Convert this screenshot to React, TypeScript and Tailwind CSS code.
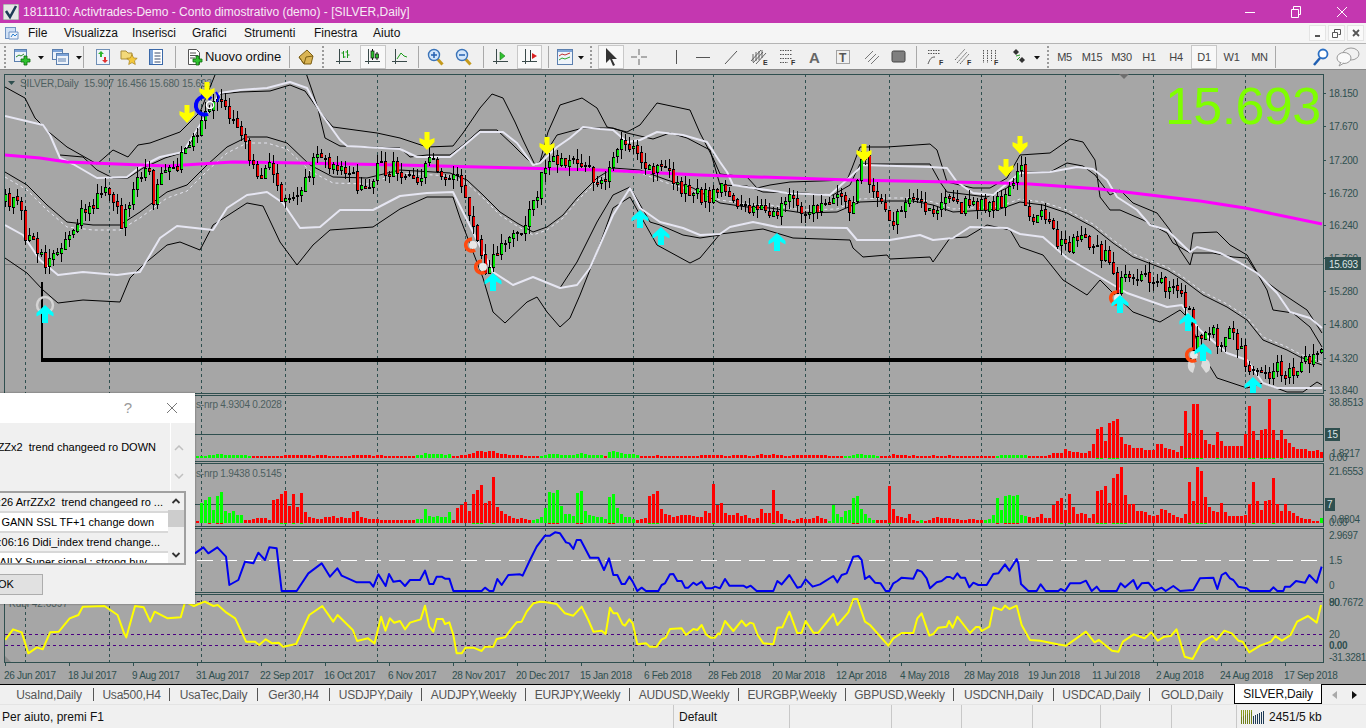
import React from "react";

const pts = (a: number[][]) => a.map((p) => p.join(",")).join(" ");
const zc = (ox: number, oy: number, a: number[][], sx = 3) => a.map(([x, y]) => [ox + x / sx, oy + y / 3]);

const closePath: number[][] = [[5,202],[17,192],[25,232],[42,262],[50,255],[62,248],[70,230],[82,208],[97,200],[110,188],[122,222],[133,182],[147,168],[153,198],[160,172],[177,175],[185,145],[197,138],[205,115],[217,102],[222,108],[233,115],[245,135],[250,158],[258,175],[268,165],[277,188],[287,202],[302,195],[305,182],[310,167],[322,148],[330,172],[340,158],[348,172],[358,188],[367,187],[377,165],[390,168],[400,173],[420,175],[428,155],[432,155],[440,178],[450,170],[458,175],[465,205],[475,230],[480,245],[485,265],[495,255],[499,250],[505,240],[515,235],[525,228],[530,200],[537,190],[543,165],[550,155],[560,160],[575,155],[585,170],[595,180],[605,175],[610,170],[613,150],[620,135],[625,145],[632,150],[640,165],[650,170],[660,168],[668,170],[673,180],[680,185],[690,192],[700,195],[710,198],[716,190],[730,195],[750,208],[765,215],[776,215],[785,200],[800,205],[810,208],[820,212],[828,205],[840,198],[850,205],[856,185],[860,165],[865,160],[868,185],[875,200],[885,210],[893,225],[900,205],[920,195],[930,215],[940,205],[960,205],[975,208],[995,205],[1000,200],[1010,190],[1017,175],[1020,165],[1025,205],[1030,218],[1043,215],[1053,233],[1060,242],[1070,247],[1080,238],[1093,247],[1100,252],[1110,263],[1117,287],[1122,283],[1133,273],[1137,283],[1147,278],[1153,283],[1163,287],[1177,283],[1185,303],[1190,310],[1193,343],[1198,343],[1202,330],[1210,328],[1220,343],[1230,330],[1237,343],[1248,367],[1257,368],[1267,372],[1277,367],[1285,377],[1293,367],[1302,362],[1310,360],[1317,360],[1322,338]];

function interp(path: number[][], x: number) {
  for (let i = 1; i < path.length; i++) {
    if (x <= path[i][0]) {
      const [a, b] = path[i - 1];
      const [c, d] = path[i];
      return b + ((d - b) * (x - a)) / (c - a || 1);
    }
  }
  return path[path.length - 1][1];
}
let seed = 12345;
const rnd = () => {
  seed = (seed * 1664525 + 1013904223) % 4294967296;
  return seed / 4294967296;
};
type Candle = { x: number; o: number; c: number; h: number; l: number };
const candles: Candle[] = [];
{
  let prev = 202;
  for (let x = 5; x <= 1321; x += 4) {
    const c = Math.round(interp(closePath, x) + (rnd() - 0.5) * 17);
    const o = Math.round(prev + (rnd() - 0.5) * 3);
    const h = Math.min(o, c) - Math.round(rnd() * 10);
    const l = Math.max(o, c) + Math.round(rnd() * 10);
    candles.push({ x, o, c, h, l });
    prev = c;
  }
}

const bandA = [[5,87],[25,98],[35,118],[50,133],[67,147],[97,164],[113,150],[128,157],[138,145],[150,143],[180,132],[200,112],[217,70],[305,70],[317,105],[325,138],[340,146],[400,148],[410,157],[427,155],[450,155],[463,145],[480,130],[497,130],[513,145],[533,165],[540,162],[557,135],[583,128],[613,128],[627,133],[653,139],[670,133],[687,138],[710,150],[720,185],[747,186],[763,192],[803,193],[833,195],[850,185],[860,164],[887,164],[930,164],[940,182],[947,192],[987,197],[1007,188],[1020,172],[1050,172],[1067,163],[1083,166],[1095,175],[1110,195],[1120,190],[1133,203],[1157,213],[1170,230],[1180,250],[1190,265],[1193,253],[1213,253],[1233,257],[1247,258],[1257,273],[1267,290],[1273,310],[1293,313],[1310,327],[1322,347]];
const bandB = [[60,155],[83,157],[97,170],[113,178],[128,178],[143,168],[165,158],[185,152],[200,126],[220,94],[240,92],[270,91],[290,85],[305,91],[320,112],[333,127],[377,133],[400,138],[427,147],[453,146],[463,133],[480,108],[492,94],[503,98],[515,122],[523,140],[535,165],[540,162],[548,132],[560,105],[582,98],[597,108],[607,127],[627,132],[640,125],[657,103],[690,110],[700,133],[713,158],[720,174],[747,177],[757,188],[770,185],[790,182],[820,181],[847,180],[852,168],[860,147],[887,147],[930,144],[937,150],[947,182],[973,188],[990,188],[1007,178],[1020,155],[1050,153],[1070,139],[1083,142],[1095,160],[1100,197],[1110,210],[1120,210],[1143,220],[1167,233],[1173,243],[1190,253],[1193,233],[1217,232],[1230,245],[1247,255],[1260,277],[1280,292],[1307,310],[1322,333]];
const whiteUp = [[5,116],[43,125],[50,135],[60,158],[73,164],[97,178],[127,177],[140,167],[160,157],[183,152],[200,125],[220,93],[240,90],[267,88],[290,82],[307,88],[320,112],[340,140],[347,146],[400,149],[417,157],[450,157],[467,143],[480,132],[503,132],[517,143],[533,165],[540,163],[557,147],[570,138],[583,127],[600,129],[613,130],[627,142],[640,140],[657,132],[683,135],[707,142],[720,162],[727,172],[733,185],[753,188],[787,193],[830,195],[850,177],[863,165],[930,167],[947,168],[957,182],[973,193],[993,195],[1020,173],[1050,172],[1077,167],[1093,169],[1107,180],[1117,197],[1137,210],[1150,225],[1167,230],[1190,252],[1197,247],[1220,253],[1240,263],[1257,273],[1277,293],[1290,312],[1310,318],[1322,328]];
const mid = [[5,172],[27,185],[47,205],[67,222],[93,225],[120,225],[140,212],[167,192],[187,185],[207,165],[227,147],[247,137],[267,137],[287,143],[310,165],[333,177],[367,178],[400,170],[450,173],[467,180],[483,195],[500,212],[517,223],[533,232],[547,227],[563,215],[577,198],[597,178],[613,168],[640,170],[667,180],[693,188],[720,203],[747,207],[770,208],[803,213],[837,212],[860,202],[887,201],[913,201],[933,205],[953,212],[987,210],[1000,209],[1020,202],[1043,205],[1067,213],[1093,227],[1113,243],[1133,257],[1167,270],[1183,280],[1203,295],[1227,307],[1247,320],[1263,340],[1287,350],[1300,357],[1322,365]];
const midDash = mid.map(([x, y]) => [x, y + (x < 130 ? 5 : x < 400 ? 6 : x < 700 ? 3 : -3)]);
const whiteLow = [[5,225],[23,235],[40,260],[58,275],[83,272],[117,275],[140,272],[160,238],[177,226],[213,230],[227,208],[247,195],[267,192],[283,203],[300,228],[320,227],[340,210],[373,210],[400,196],[427,193],[453,192],[458,202],[473,232],[493,272],[513,285],[533,277],[560,288],[577,285],[590,268],[603,238],[613,215],[630,188],[640,208],[660,222],[683,228],[700,235],[720,234],[730,227],[753,222],[777,227],[847,228],[857,240],[890,240],[920,235],[933,240],[953,238],[970,227],[1007,228],[1020,234],[1043,237],[1067,258],[1100,277],[1127,293],[1167,307],[1182,305],[1187,313],[1200,330],[1227,353],[1247,360],[1263,383],[1277,388],[1322,388]];
const lowA = [[5,258],[27,273],[43,290],[58,303],[83,300],[120,302],[130,278],[143,265],[167,245],[180,242],[200,250],[213,225],[247,203],[263,206],[280,242],[297,265],[313,245],[330,230],[373,227],[400,209],[427,197],[453,197],[460,218],[473,252],[483,278],[493,312],[505,323],[527,302],[537,297],[547,312],[560,327],[570,318],[580,295],[597,252],[613,208],[630,197],[640,215],[657,245],[690,263],[700,258],[720,234],[763,229],[793,238],[850,240],[853,248],[863,257],[887,255],[890,259],[930,257],[933,262],[950,238],[967,237],[987,225],[1010,230],[1020,247],[1043,255],[1063,280],[1087,295],[1100,280],[1113,293],[1133,312],[1160,322],[1180,310],[1190,320],[1200,350],[1217,378],[1247,388],[1263,383],[1287,392],[1303,392],[1317,382],[1322,385]];
const lowB = [[560,288],[577,262],[597,222],[613,195],[630,187],[650,222],[660,225],[683,235],[700,238],[720,235]];
const magenta = [[5,155],[40,158],[67,162],[117,164],[167,166],[233,162],[300,163],[400,165],[600,170],[700,175],[850,180],[1000,183],[1030,184],[1100,189],[1150,195],[1200,201],[1245,208],[1322,224]];

const blue = [
  ...zc(0, 385, [[585,505],[610,487],[625,505],[652,487],[678,515],[688,600],[715,585],[735,530],[760,535],[775,503],[795,525],[808,487],[830,490],[845,618],[890,618],[925,565],[965,535],[990,575],[1012,550],[1025,572],[1070,592],[1110,592],[1120,605],[1135,568],[1157,603],[1167,567],[1180,590]]),
  ...zc(400, 395, [[0,557],[15,573],[30,555],[60,555],[75,527],[88,567],[100,567],[110,545],[125,545],[135,551],[148,551],[160,588],[245,588],[255,578],[268,588],[280,588],[292,552],[305,570],[325,540],[360,538],[368,542],[390,495],[410,455],[435,422],[450,422],[465,412],[480,415],[498,442],[508,445],[520,462],[530,435],[542,435],[570,488],[595,488],[612,525],[627,490],[640,540],[652,540],[665,567],[675,567],[688,545],[698,560],[712,588],[725,578],[738,588],[775,588],[785,570],[795,565],[810,538],[820,537],[832,558],[845,558],[855,578],[865,578],[880,563],[890,570],[905,560],[918,580],[935,580],[945,575]]),
  ...zc(720, 395, [[0,580],[15,552],[28,572],[70,572],[80,578],[92,572],[110,588],[160,588],[172,558],[185,568],[208,540],[232,578],[243,575],[257,553],[278,575],[300,568],[340,543],[352,562],[365,540],[380,535],[400,485],[415,483],[425,495],[435,552],[448,543],[465,563],[482,565],[497,588],[508,588],[520,565],[532,558],[545,548],[580,551],[592,525],[605,530],[620,550],[630,580],[650,562],[665,558],[680,546],[690,546],[700,552],[712,535],[722,548],[735,548],[748,577],[760,563],[775,570],[800,570],[820,537],[835,535],[855,508],[868,527],[890,492]]),
  ...zc(1000, 390, [[55,520],[63,582],[85,603],[110,603],[122,583],[137,603],[175,603],[182,597],[195,603],[210,580],[240,580],[258,572],[275,603],[290,590],[300,603],[350,603],[362,580],[375,592],[400,570],[412,597],[425,580],[445,578],[465,602],[485,593],[497,603],[520,588],[540,603],[580,600],[600,565],[640,563],[652,597],[665,555],[677,548],[690,565],[700,570],[715,590],[740,595],[750,603],[810,603],[820,592],[832,603],[850,603],[855,590],[870,590],[888,573],[915,578],[928,555],[950,578],[965,530]]),
];
const yellow = [
  ...zc(0, 600, [[12,120],[30,88],[50,97],[65,160],[85,142],[98,148],[115,97],[135,95],[160,55],[180,45],[190,20],[240,18],[270,45],[285,100],[290,112],[310,18],[330,22],[345,65],[355,35],[385,55],[415,52],[425,5],[445,18],[470,5],[490,18],[500,15],[520,38],[540,55],[565,125],[585,125],[595,135],[610,118],[625,130],[640,128],[650,140],[680,132],[710,45],[740,18],[765,65],[775,45],[810,90],[820,123],[845,115],[860,130],[875,50],[885,92],[895,55],[905,68]], 2.296),
  ...zc(400, 395, [[0,678],[15,703],[30,683],[62,673],[75,632],[88,695],[100,710],[110,672],[128,672],[135,687],[148,682],[160,720],[170,775],[185,775],[197,758],[220,758],[245,768],[255,755],[280,755],[290,732],[315,727],[335,700],[350,682],[365,680],[380,650],[400,625],[420,620],[440,622],[470,627],[495,655],[520,662],[545,635],[565,675],[580,710],[605,707],[617,717],[630,638],[640,655],[652,655],[668,688],[675,692],[688,673],[698,685],[712,748],[738,745],[750,755],[770,755],[785,733],[797,728],[810,702],[845,700],[858,720],[880,702],[892,705],[905,690],[918,718],[932,728],[945,728],[955,715]]),
  ...zc(720, 395, [[0,718],[15,678],[40,708],[65,677],[78,693],[90,683],[100,686],[113,720],[130,745],[160,748],[172,698],[187,697],[208,650],[232,715],[245,713],[257,678],[280,713],[295,713],[340,657],[352,690],[385,652],[400,612],[412,612],[435,680],[450,690],[505,752],[520,730],[545,714],[580,714],[592,670],[605,655],[628,722],[640,717],[655,698],[680,695],[687,678],[698,698],[712,665],[750,714],[768,696],[778,696],[785,708],[808,695],[820,637],[845,645],[855,632],[868,642],[890,632],[905,690],[930,735]]),
  ...zc(683, 600, [[820,122],[860,133],[880,137],[900,118],[925,95],[945,127],[955,120],[985,152],[1000,155],[1010,125],[1035,103],[1060,115],[1075,97],[1090,122],[1105,110],[1120,108],[1133,88],[1152,170],[1170,177],[1190,128],[1215,108],[1225,120],[1243,92],[1260,100],[1275,122],[1285,125],[1300,157],[1325,137],[1350,125],[1360,108],[1375,122],[1395,105],[1410,65],[1435,48],[1455,68],[1465,15]], 2.296),
];

const fill = (m: Map<number, number>, start: number, arr: number[]) => arr.forEach((v, i) => m.set(start + 4 * i, v));
const vol1 = new Map<number, number>();
for (let x = 197; x <= 1321; x += 4) vol1.set(x, 2);
fill(vol1, 197, [-2,-2,-2,-3,-3,-4,-4,-3,-3,-3,-3,-3,-3,-2]);
fill(vol1, 285, [3,3,3,3,3,3,3,2,3,3,3]);
fill(vol1, 353, [3,3,3,3,3,2,3,3]);
fill(vol1, 401, [2,2,2,2,-3,-3,-5,-4,-4,-4,-4,-3,-4,2,2,3,3,4,5,7,7,6,7,7,5,4,4,3,3,3,3,2,2,2,2,-2,-3,-4,-4,-4,-3,-3,-3,-3,-4,-5,-4,-3,-3,-3,-3,2,-6,-7,-6,-5,-4,-4,-4,-3,2,2,2,2,3,2,2,2,2,2,2,2,2,2,2,3,3,3,3,3]);
fill(vol1, 721, [3,2,2,3,3,3,3,2,2,3,4,3,3,4,3,3,2,2,3,3,3,3,3,3,3,3,3,2,2,2,2,-2,-2,-3,-4,-4,-3,-3,-3,-2,2,2,2,4,3,3,3,2,3,2,2,2,2,3,2,2,2,3,2,2,2,2,2,2,2,2,2,2,2,-2]);
fill(vol1, 1001, [-3,-3,-3,-3,-3,-3,-3,2,2,2,2,2,3,5,5,5,9,7,6,6,5,5,7,14,29,31,17,35,37,39,21,14,13,10,10,10,8,8,8,14,14,10,9,8,6,12,47,25,54,54,28,18,14,13,26,17,12,12,12,12,12,24,52,27,18,28,29,59,28,18,28,19,15,11,9,9,9,7,7,8,6]);
const vol2 = new Map<number, number>();
for (let x = 197; x <= 1321; x += 4) vol2.set(x, 4);
fill(vol2, 197, [2,-20,-23,-26,-13,-27,-31,-12,-10,-12,-8,-8,3,3,4,5,5,5,3,23,24,29,32,17,29,16,30,11,6,5,4,4,6,6,7,5,6,5,5,11,12,6,5,4,4,4,3,3,3,3,3]);
fill(vol2, 401, [3,3,3,3,-4,-4,-14,-7,-6,-7,-6,-6,-11,3,15,18,21,12,29,33,38,20,22,46,16,12,9,7,5,4,5,4,3,-3,-4,-6,-15,-31,-30,-33,-17,-9,-9,-7,-30,-32,-12,-8,-7,-6,-6,-4,-26,-29,-15,-9,-6,-6,-4,3,4,5,27,29,32,14,9,8,6,7,8,8,8,7,6,6,12,10,39,18]);
fill(vol2, 721, [20,10,8,8,10,7,8,5,4,5,14,10,10,33,12,9,4,3,2,4,5,4,4,5,7,5,4,-2,-18,-9,-6,-12,-13,-25,-27,-14,-9,-5,-3,3,3,3,37,14,7,6,5,9,3,2,-3,2,3,5,6,5,5,5,4,4,3,3,4,4,3,3,-3,-4,-8,-25]);
fill(vol2, 1001, [-13,-27,-28,-27,-28,-8,-7,6,5,6,9,5,5,18,22,25,13,29,16,9,10,9,5,9,32,33,37,20,45,49,56,28,19,19,12,12,11,8,7,8,14,13,10,8,6,5,9,41,22,56,52,26,16,12,11,20,11,7,7,7,7,8,19,41,22,13,22,23,45,19,12,19,12,10,7,5,4,4,2,2,-5,2,-7]);

const vgrid = [25,109,201,285,377,465,545,633,713,805,889,981,1065,1153,1245];
const axisC = "#2f4f4f";

function AxisText({ x = 1329, y, children, bold }: { x?: number; y: number; children: React.ReactNode; bold?: boolean }) {
  return <text x={x} y={y + 4} fontSize={10} letterSpacing={-0.3} fill={axisC} fontWeight={bold ? 700 : 400}>{children}</text>;
}
function Pane({ y0, y1, id, children, axis }: { y0: number; y1: number; id: string; children: React.ReactNode; axis: React.ReactNode }) {
  return (
    <svg className="block shrink-0" width={1366} height={y1 - y0} viewBox={`0 ${y0} 1366 ${y1 - y0}`}>
      <defs><clipPath id={id}><rect x={5} y={y0 + 1} width={1318} height={y1 - y0 - 2} /></clipPath></defs>
      {vgrid.map((x) => <line key={x} x1={x + 0.5} x2={x + 0.5} y1={y0} y2={y1} stroke={axisC} strokeDasharray="3 3" shapeRendering="crispEdges" />)}
      <g clipPath={`url(#${id})`}>{children}</g>
      <g shapeRendering="crispEdges" fill="none" stroke={axisC}>
        <line x1={4} x2={1324} y1={y0 + 0.5} y2={y0 + 0.5} />
        <line x1={4} x2={1324} y1={y1 - 0.5} y2={y1 - 0.5} />
        <line x1={4.5} x2={4.5} y1={y0} y2={y1} />
        <line x1={1323.5} x2={1323.5} y1={y0} y2={y1} />
      </g>
      {axis}
    </svg>
  );
}
const L = ({ p, c, w = 1, dash }: { p: number[][]; c: string; w?: number; dash?: string }) => (
  <polyline points={pts(p)} fill="none" stroke={c} strokeWidth={w} strokeDasharray={dash} strokeLinejoin="round" />
);

const DownArrow = ({ x, y }: { x: number; y: number }) => (
  <path d={`M${x - 2.5} ${y}h5v8l5 -2v4l-7.5 8l-7.5 -8v-4l5 2z`} fill="#ffff00" />
);
const UpArrow = ({ x, y }: { x: number; y: number }) => (
  <path d={`M${x} ${y}l8.500 8v3.500l-5.500 -3v9.500h-6v-9.500l-5.500 3v-3.500z`} fill="#00ffff" />
);
const Orange = ({ x, y }: { x: number; y: number }) => (
  <g fill="none">
    <circle cx={x + 3} cy={y} r={4} fill="#e8e8e8" />
    <path d={`M${x + 2} ${y - 6}a6 6 0 1 0 3 11`} stroke="#ff4a10" strokeWidth={3.500} />
  </g>
);
const Bars = ({ m, bottom }: { m: Map<number, number>; bottom: number }) => (
  <g shapeRendering="crispEdges">
    {[...m.entries()].map(([x, v]) => {
      const h = Math.abs(v);
      return (
        <g key={x}>
          <rect x={x - 1} y={bottom - h} width={3} height={h} fill={v < 0 ? "#00ff00" : "#ff0000"} />
          {h > 24 && <rect x={x - 1} y={bottom} width={3} height={1} fill={v < 0 ? "#ff0000" : "#00ff00"} />}
        </g>
      );
    })}
  </g>
);

function Main() {
  return (
    <Pane y0={74} y1={394} id="m" axis={
      <g>
        {[[93,"18.150"],[126,"17.670"],[160,"17.200"],[193,"16.720"],[225,"16.240"],[258,"15.760"],[291,"15.280"],[324,"14.800"],[358,"14.320"],[390,"13.840"]].map(([y, t]) => (
          <g key={t}><line x1={1324} x2={1326} y1={(y as number) + 0.5} y2={(y as number) + 0.5} stroke={axisC} shapeRendering="crispEdges" /><AxisText y={y as number}>{t}</AxisText></g>
        ))}
        <rect x={1325} y={257} width={36} height={13} fill={axisC} />
        <text x={1329} y={268} fontSize={10} letterSpacing={-0.3} fill="#dce4e4">15.693</text>
        <path d="M1119 74h10l-5 5z" fill="#6e6e6e" />
      </g>
    }>
      <rect x={0} y={264} width={1323} height={1} fill="#7d7d7d" />
      <text x={20} y={87} fontSize={10} letterSpacing={-0.1} fill="#4d5f5f" style={{ whiteSpace: "pre" }}>SILVER,Daily  15.907 16.456 15.680 15.693</text>
      <path d="M8 81h7l-3.500 4z" fill={axisC} />
      <text x={1165} y={124} fontSize={52} fill="#7fff00" letterSpacing={-0.6}>15.693</text>
      <L p={bandA} c="#000" />
      <L p={bandB} c="#000" />
      <L p={mid} c="#000" />
      <L p={lowA} c="#000" />
      <L p={lowB} c="#000" />
      <L p={midDash} c="#e4e4ee" dash="3 3" />
      <L p={whiteUp} c="#e6e6f2" w={2} />
      <L p={whiteLow} c="#e6e6f2" w={2} />
      <L p={magenta} c="#ff00ff" w={3} />
      <g shapeRendering="crispEdges">
        {candles.map((k) => {
          const top = Math.min(k.o, k.c);
          const h = Math.max(Math.abs(k.o - k.c), 1);
          return (
            <g key={k.x}>
              <rect x={k.x} y={k.h} width={1} height={k.l - k.h} fill="#000" />
              <rect x={k.x - 1} y={top} width={3} height={h + 1} fill="#000" />
              {h > 1 && <rect x={k.x} y={top + 1} width={2} height={h - 1} fill={k.c < k.o ? "#00e000" : "#e80000"} />}
            </g>
          );
        })}
      </g>
      <rect x={41} y={282} width={2} height={78} fill="#000" shapeRendering="crispEdges" />
      <rect x={41} y={358} width={1155} height={4} fill="#000" shapeRendering="crispEdges" />
      <circle cx={45} cy={305} r={8} fill="none" stroke="#d4d4d4" strokeWidth={2.500} />
      <path d="M1193 358a8 8 0 0 0 0 15l2 -7z M1206 373a8 8 0 0 0 -3 -15l-2 8z" fill="#dcdcdc" />
      <Orange x={470} y={245} />
      <Orange x={480} y={267} />
      <Orange x={1115} y={298} />
      <Orange x={1191} y={355} />
      <g fill="none">
        <path d="M211 99a9 9 0 1 0 -3 15" stroke="#0000ff" strokeWidth={4} />
        <circle cx={210} cy={105} r={3.500} stroke="#fff" strokeWidth={1.500} />
        <path d="M216 92l3 5l-2 5" stroke="#0000ff" strokeWidth={2} />
      </g>
      {[[187,105],[207,82],[427,132],[547,137],[864,144],[1006,159],[1020,136]].map(([x, y]) => <DownArrow key={x} x={x} y={y} />)}
      {[[45,305],[493,273],[640,210],[661,227],[777,233],[1120,295],[1188,313],[1203,343],[1253,377]].map(([x, y]) => <UpArrow key={x} x={x} y={y} />)}
    </Pane>
  );
}

function Subs() {
  return (
    <>
      <Pane y0={395} y1={462} id="s1" axis={
        <g>
          <AxisText y={402}>38.8513</AxisText>
          <rect x={1325} y={428} width={15} height={13} fill={axisC} />
          <text x={1327} y={438} fontSize={10} fill="#dce4e4">15</text>
          <AxisText x={1331} y={453}>1.8217</AxisText>
          <AxisText y={457}>0.00</AxisText>
        </g>
      }>
        <rect x={5} y={434} width={1318} height={1} fill={axisC} />
        <text x={196} y={408} fontSize={10} letterSpacing={-0.2} fill="#4d5f5f">s-nrp 4.9304 0.2028</text>
        <Bars m={vol1} bottom={458} />
      </Pane>
      <Pane y0={463} y1={527} id="s2" axis={
        <g>
          <AxisText y={471}>21.6553</AxisText>
          <rect x={1325} y={498} width={10} height={13} fill={axisC} />
          <text x={1327} y={508} fontSize={10} fill="#dce4e4">7</text>
          <AxisText x={1331} y={519}>0.8804</AxisText>
          <AxisText y={522}>0.00</AxisText>
        </g>
      }>
        <rect x={5} y={504} width={1318} height={1} fill={axisC} />
        <text x={196} y={477} fontSize={10} letterSpacing={-0.2} fill="#4d5f5f">s-nrp 1.9438 0.5145</text>
        <Bars m={vol2} bottom={523} />
      </Pane>
      <Pane y0={528} y1={593} id="s3" axis={
        <g>
          <AxisText y={535}>2.9697</AxisText>
          <AxisText y={560}>1.5</AxisText>
          <AxisText y={585}>0</AxisText>
        </g>
      }>
        <line x1={5} x2={1323} y1={560.5} y2={560.5} stroke="#fff" strokeWidth={1} strokeDasharray="16 8" shapeRendering="crispEdges" />
        <L p={blue} c="#0000f0" w={2} />
      </Pane>
      <Pane y0={594} y1={663} id="s4" axis={
        <g>
          <AxisText y={602}>80</AxisText>
          <AxisText y={602}>90.7672</AxisText>
          <AxisText y={634}>20</AxisText>
          <AxisText y={645} bold>0.00</AxisText>
          <AxisText y={657}>-31.3281</AxisText>
        </g>
      }>
        {[601, 634, 645].map((y) => <line key={y} x1={5} x2={1323} y1={y + 0.5} y2={y + 0.5} stroke="#4b0082" strokeDasharray="3 3" shapeRendering="crispEdges" />)}
        <text x={9} y={607} fontSize={10} fill="#4d5f5f">Kubi 42.6397</text>
        <L p={yellow} c="#ffff00" w={2} />
        <path d="M5 662v-6l6 6z" fill="#8a8a8a" />
      </Pane>
    </>
  );
}

const dates = ["26 Jun 2017","18 Jul 2017","9 Aug 2017","31 Aug 2017","22 Sep 2017","16 Oct 2017","6 Nov 2017","28 Nov 2017","20 Dec 2017","15 Jan 2018","6 Feb 2018","28 Feb 2018","20 Mar 2018","12 Apr 2018","4 May 2018","28 May 2018","19 Jun 2018","11 Jul 2018","2 Aug 2018","24 Aug 2018","17 Sep 2018"];

/* ---------- toolbar icons ---------- */
const Ic = ({ children, w = 18, h = 18 }: { children: React.ReactNode; w?: number; h?: number }) => (
  <svg width={w} height={h} viewBox={`0 0 ${w} ${h}`} className="block shrink-0">{children}</svg>
);
const Plus = ({ x = 8, y = 8 }: { x?: number; y?: number }) => (
  <path d={`M${x + 3} ${y}h3v3h3v3h-3v3h-3v-3h-3v-3h3z`} fill="#2fc22f" stroke="#0c6a0c" strokeWidth={0.8} />
);
const Win = ({ x = 1, y = 1, w = 12, h = 12 }: { x?: number; y?: number; w?: number; h?: number }) => (
  <g>
    <rect x={x + 0.5} y={y + 0.5} width={w} height={h} fill="#eef3fa" stroke="#5b7fae" />
    <rect x={x + 1} y={y + 1} width={w - 1} height={2} fill="#7ea4d8" />
  </g>
);
const Caret = () => <path d="M0 0h6l-3 3.500z" fill="#111" transform="translate(4 8)" />;
const CaretBox = () => <Ic w={10} h={18}><Caret /></Ic>;
const Axes = () => <path d="M4.500 1v15M1 13.500h15" stroke="#3a4a4a" fill="none" />;

const iNew = <Ic><Win /><path d="M3 9l3 -2l2 1l3 -2" stroke="#2c8a2c" fill="none" /><Plus /></Ic>;
const iProf = <Ic><Win x={1} y={1} w={10} h={10} /><Win x={5} y={5} w={12} h={11} /><path d="M7 11h8M7 13h8" stroke="#5b7fae" /></Ic>;
const iMarket = <Ic><rect x={2.500} y={1.500} width={13} height={15} fill="#eef3fa" stroke="#6f8fb5" /><path d="M7 3l3 3h-2v3h-2v-3h-2z" fill="#2fb52f" /><path d="M11 15l-3 -3h2v-3h2v3h2z" fill="#e03030" /></Ic>;
const iNav = <Ic><path d="M1 3h5l2 2h4v6h-11z" fill="#f3d97a" stroke="#a98d3a" /><path d="M12 6.500l1.600 3.400l3.600 .4l-2.700 2.500l.8 3.700l-3.300 -1.900l-3.300 1.900l.8 -3.700l-2.700 -2.500l3.600 -.4z" fill="#f4c93c" stroke="#a5801d" strokeWidth={0.7} /></Ic>;
const iTerm = <Ic><rect x={2.500} y={1.500} width={13} height={15} fill="#fff" stroke="#3a68a8" /><rect x={3} y={2} width={3} height={14} fill="#7ea4d8" /><path d="M7.500 5h6M7.500 8h6M7.500 11h6M7.500 14h6" stroke="#3a4a6a" /></Ic>;
const iOrder = <Ic><path d="M2.500 1.500h8l3 3v12h-11z" fill="#fff" stroke="#555" /><path d="M4 5h6M4 7.500h8M4 10h5" stroke="#555" /><Plus x={7} y={8} /></Ic>;
const iGold = <Ic><path d="M2 9l8 -7l6 6l-2 8h-7z" fill="#d9b454" stroke="#7d5f14" /><path d="M2 9l5 7l2 -7l7 -1" fill="none" stroke="#7d5f14" /></Ic>;
const iBar = <Ic><Axes /><path d="M8.500 3v7M6.500 5h2M8.500 9h2M12.500 2v8M10.500 4h2M12.500 7h2" stroke="#1a9a1a" fill="none" /></Ic>;
const iCandle = <Ic><Axes /><path d="M8.500 1v11" stroke="#111" /><rect x={7} y={3} width={3} height={7} fill="#2fc22f" stroke="#111" strokeWidth={0.7} /><path d="M13 4v8" stroke="#111" /><rect x={11.500} y={6} width={3} height={4} fill="#2fc22f" stroke="#111" strokeWidth={0.7} /></Ic>;
const iLine = <Ic><Axes /><path d="M6 11l4 -6l3 3l3 1" stroke="#1a9a1a" fill="none" /></Ic>;
const Zoom = ({ plus }: { plus?: boolean }) => (
  <Ic>
    <path d="M10.500 11l5 5.500" stroke="#c59a1c" strokeWidth={3} />
    <circle cx={7} cy={7} r={5.500} fill="#d4e6fa" stroke="#3a73b8" strokeWidth={1.400} />
    <path d={plus ? "M4 7h6M7 4v6" : "M4 7h6"} stroke="#2560b0" strokeWidth={1.500} />
  </Ic>
);
const iAuto = <Ic><Axes /><path d="M8 4l5 4l-5 4z" fill="#2fc22f" stroke="#1a7a1a" strokeWidth={0.6} /></Ic>;
const iShift = <Ic><Axes /><path d="M9.500 2v11" stroke="#2a3a3a" /><path d="M16 8l-5 -3v6z" fill="#d82020" /></Ic>;
const iTempl = <Ic><Win x={1} y={1} w={15} h={15} /><path d="M3 8l3 -2l3 1l5 -2" stroke="#c03030" fill="none" /><path d="M3 12l3 -2l3 1l5 -2" stroke="#2fa52f" fill="none" /></Ic>;
const iCursor = <Ic w={14} h={20}><path d="M2 1v15l4 -4l3 7l2 -1l-3 -6h5z" fill="#333" /></Ic>;
const iCross = <Ic><path d="M9 1v6M9 11v6M1 9h6M11 9h6" stroke="#666" fill="none" /></Ic>;
const iV = <Ic><path d="M9.500 2v14" stroke="#555" /></Ic>;
const iH = <Ic><path d="M2 9.500h14" stroke="#555" /></Ic>;
const iT = <Ic><path d="M3 16l12 -13" stroke="#555" /></Ic>;
const Tag = ({ t }: { t: string }) => <text x={13} y={17} fontSize={7} fontWeight={700} fill="#333">{t}</text>;
const iE = <Ic><path d="M1 13l10 -11M3 15l10 -11M6 16l10 -11M3 6v8M6 4v9M9 3v9M12 2v8" stroke="#555" fill="none" strokeWidth={0.9} /><Tag t="E" /></Ic>;
const iF = <Ic><path d="M2 2.500h12M2 6.500h12M2 10.500h12M2 14.500h8" stroke="#555" strokeDasharray="1.500 1" /><Tag t="F" /></Ic>;
const iA = <Ic><text x={3} y={15} fontSize={15} fontWeight={700} fill="#666">A</text></Ic>;
const iTx = <Ic><rect x={2.500} y={2.500} width={13} height={13} fill="none" stroke="#555" strokeDasharray="1 1" /><text x={5} y={14} fontSize={12} fontWeight={700} fill="#555">T</text></Ic>;
const iCh = <Ic><path d="M2 11l8 -8M5 14l8 -8M8 16l8 -8" stroke="#777" /></Ic>;
const iRect = <Ic><rect x={2} y={3} width={13} height={11} rx={1.500} fill="#7f7f7f" stroke="#444" /></Ic>;
const iFA = <Ic><path d="M2 2.500h12M2 5.500h12" stroke="#555" strokeDasharray="1.500 1" /><path d="M2 16c2 -5 3 -7 7 -7" stroke="#555" fill="none" /><Tag t="F" /></Ic>;
const iFC = <Ic><path d="M1 12l10 -11M3 15l10 -11M6 16l9 -10" stroke="#666" strokeDasharray="2 .8" /><Tag t="F" /></Ic>;
const iFT = <Ic><path d="M2.500 2v13M6.500 2v13M10.500 2v11M14.500 2v9" stroke="#555" strokeDasharray="1.500 1" /><Tag t="F" /></Ic>;
const iMore = <Ic><path d="M6 1l3 3l-3 3l-3 -3z" fill="#333" /><path d="M12 9l3 3l-3 3l-3 -3z" fill="#333" /><path d="M6 8l4 -1M7 12l3 -3" stroke="#2a9a2a" /></Ic>;
const iSearch = <Ic><circle cx={11} cy={6} r={4.500} fill="#fff" stroke="#2a6fc4" strokeWidth={1.800} /><path d="M8 10l-6 7" stroke="#1f5fb2" strokeWidth={2.500} /></Ic>;
const iChat = <Ic w={24} h={20}><ellipse cx={15} cy={7} rx={8} ry={6} fill="#f1f1f1" stroke="#9a9a9a" /><ellipse cx={8} cy={11} rx={7} ry={5.500} fill="#fafafa" stroke="#9a9a9a" /><path d="M5 15l-2 4l5 -3" fill="#fafafa" stroke="#9a9a9a" /></Ic>;

const Sep = () => <div className="w-[1px] h-[22px] bg-[#a9a9a9] shrink-0" />;
const Grip = () => <div className="h-[22px] border-l-2 border-dotted border-[#9a9a9a] shrink-0" />;

function Slot({ cls, on, children }: { cls: string; on?: boolean; children: React.ReactNode }) {
  return (
    <div className={`${cls} h-[24px] flex items-center justify-center shrink-0 ${on ? "bg-[#f8f8f8] border border-[#c8c8c8]" : ""}`}>{children}</div>
  );
}
const TF = ({ cls, t, on }: { cls: string; t: string; on?: boolean }) => (
  <Slot cls={cls} on={on}><span className="text-[11px] tracking-[-0.3px] text-[#444]">{t}</span></Slot>
);

function Toolbar() {
  return (
    <div className="h-[27px] flex items-center bg-[#f0f0f0] border-t border-[#b4b4b4] shrink-0">
      <div className="w-[4px]" /><Grip /><div className="w-[4px]" />
      <Slot cls="w-[24px]">{iNew}</Slot><CaretBox />
      <div className="w-[4px]" />
      <Slot cls="w-[24px]">{iProf}</Slot><CaretBox />
      <div className="w-[1px]" /><Sep />
      <div className="w-[7px]" />
      <Slot cls="w-[23px]">{iMarket}</Slot>
      <Slot cls="w-[29px]">{iNav}</Slot>
      <Slot cls="w-[26px]">{iTerm}</Slot>
      <div className="w-[6px]" /><Sep />
      <div className="w-[10px]" />
      <Slot cls="w-[18px]">{iOrder}</Slot>
      <span className="text-[13px] w-[80px] text-[#111] pl-[1px] tracking-[-0.1px] shrink-0">Nuovo ordine</span>
      <div className="w-[5px]" /><Sep />
      <Slot cls="w-[32px]">{iGold}</Slot>
      <Grip />
      <div className="w-[4px]" />
      <Slot cls="w-[32px]">{iBar}</Slot>
      <Slot cls="w-[26px]" on>{iCandle}</Slot>
      <Slot cls="w-[28px]">{iLine}</Slot>
      <div className="w-[4px]" /><Sep />
      <Slot cls="w-[34px]"><Zoom plus /></Slot>
      <Slot cls="w-[22px]"><Zoom /></Slot>
      <div className="w-[8px]" /><Sep />
      <Slot cls="w-[33px]">{iAuto}</Slot>
      <Slot cls="w-[25px]" on>{iShift}</Slot>
      <div className="w-[6px]" /><Sep />
      <div className="w-[7px]" />
      <Slot cls="w-[18px]">{iTempl}</Slot><CaretBox />
      <div className="w-[6px]" /><Grip />
      <div className="w-[6px]" />
      <Slot cls="w-[26px]" on>{iCursor}</Slot>
      <Slot cls="w-[30px]">{iCross}</Slot>
      <div className="w-[8px]" />
      <Slot cls="w-[27px]">{iV}</Slot>
      <Slot cls="w-[28px]">{iH}</Slot>
      <Slot cls="w-[28px]">{iT}</Slot>
      <Slot cls="w-[28px]">{iE}</Slot>
      <Slot cls="w-[28px]">{iF}</Slot>
      <Slot cls="w-[27px]">{iA}</Slot>
      <Slot cls="w-[29px]">{iTx}</Slot>
      <Slot cls="w-[29px]">{iCh}</Slot>
      <Slot cls="w-[26px]">{iRect}</Slot>
      <div className="w-[4px]" /><Sep />
      <div className="w-[4px]" />
      <Slot cls="w-[28px]">{iFA}</Slot>
      <Slot cls="w-[28px]">{iFC}</Slot>
      <Slot cls="w-[26px]">{iFT}</Slot>
      <div className="w-[5px]" />
      <Slot cls="w-[22px]">{iMore}</Slot><CaretBox />
      <div className="w-[7px]" /><Grip />
      <div className="w-[3px]" />
      <TF cls="w-[25px]" t="M5" />
      <TF cls="w-[30px]" t="M15" />
      <TF cls="w-[29px]" t="M30" />
      <TF cls="w-[26px]" t="H1" />
      <TF cls="w-[28px]" t="H4" />
      <div className="w-[1px]" />
      <TF cls="w-[26px]" t="D1" on />
      <TF cls="w-[29px]" t="W1" />
      <TF cls="w-[27px]" t="MN" />
      <div className="w-[2px]" /><Sep />
      <div className="flex-1" />
      <Slot cls="w-[26px]">{iSearch}</Slot>
      <Slot cls="w-[28px]">{iChat}</Slot>
      <div className="w-[4px]" />
    </div>
  );
}

const MdiBtn = ({ children }: { children: React.ReactNode }) => (
  <div className="w-[17px] h-[16px] bg-[#fafafa] border border-[#e4e4e4] flex items-center justify-center">{children}</div>
);

const tabs = [
  { t: "UsaInd,Daily", w: "w-[94px] pl-[5px]" },
  { t: "Usa500,H4", w: "w-[76px]" },
  { t: "UsaTec,Daily", w: "w-[88px]" },
  { t: "Ger30,H4", w: "w-[72px]" },
  { t: "USDJPY,Daily", w: "w-[92px]" },
  { t: "AUDJPY,Weekly", w: "w-[104px]" },
  { t: "EURJPY,Weekly", w: "w-[104px]" },
  { t: "AUDUSD,Weekly", w: "w-[109px]" },
  { t: "EURGBP,Weekly", w: "w-[107px]" },
  { t: "GBPUSD,Weekly", w: "w-[108px]" },
  { t: "USDCNH,Daily", w: "w-[100px]" },
  { t: "USDCAD,Daily", w: "w-[96px]" },
  { t: "GOLD,Daily", w: "w-[84px]" },
];

function Dialog() {
  const Row = ({ t, gray, end }: { t: string; gray?: boolean; end: string }) => (
    <div className={`h-[20px] flex items-center border-b-2 border-[#d8d8d8] overflow-hidden ${gray ? "bg-[#f0f0f0]" : "bg-white"}`}>
      <div className={`${end} flex justify-end whitespace-nowrap text-[11px] text-black shrink-0`}>{t}</div>
    </div>
  );
  return (
    <div className="absolute left-[-205px] top-[393px] w-[400px] h-[211px] bg-[#f0f0f0] flex flex-col shadow-[0_0_2px_rgba(0,0,0,0.4)]">
      <div className="h-[30px] bg-white flex items-center justify-end shrink-0">
        <span className="text-[15px] text-[#9a9a9a] mr-[34px]">?</span>
        <svg width={12} height={12} viewBox="0 0 12 12" className="mr-[17px]"><path d="M1 1l10 10M11 1l-10 10" stroke="#777" fill="none" /></svg>
      </div>
      <div className="h-[68px] flex shrink-0">
        <div className="w-[375px] pt-[16px] text-right text-[11px] text-black whitespace-nowrap shrink-0 pr-[14px]">2018.09.21 19:00:26 ArrZZx2&nbsp; trend changeed ro DOWN</div>
        <div className="w-[1px] bg-white" />
        <div className="w-[15px] flex flex-col items-center justify-between pt-[22px] pb-[12px]">
          <svg width={10} height={6} viewBox="0 0 10 6"><path d="M1 5l4 -4l4 4" stroke="#c0c0c0" strokeWidth={1.500} fill="none" /></svg>
          <svg width={10} height={6} viewBox="0 0 10 6"><path d="M1 1l4 4l4 -4" stroke="#c0c0c0" strokeWidth={1.500} fill="none" /></svg>
        </div>
      </div>
      <div className="w-[391px] h-[74px] border-2 border-[#a0a0a0] border-l-0 bg-white flex overflow-hidden shrink-0">
        <div className="w-[373px] shrink-0">
          <Row t="2018.09.21 19:00:26 ArrZZx2&nbsp; trend changeed ro ..." gray end="w-[368px]" />
          <Row t="2018.09.21 19:00:17 GANN SSL TF+1 change down" end="w-[359px]" />
          <Row t="2018.09.21 19:06:16 Didi_index trend change..." gray end="w-[365px]" />
          <Row t="2018.09.21 DAILY Super signal : strong buy" end="w-[352px]" />
        </div>
        <div className="w-[16px] bg-[#f0f0f0] flex flex-col items-center justify-between shrink-0 relative">
          <svg width={10} height={18} viewBox="0 0 10 18"><path d="M1.500 10l3.500 -3.500l3.500 3.500" stroke="#333" strokeWidth={1.800} fill="none" /></svg>
          <div className="w-[16px] h-[17px] bg-[#cdcdcd] absolute top-[17px]" />
          <svg width={10} height={18} viewBox="0 0 10 18"><path d="M1.500 8l3.500 3.500l3.500 -3.500" stroke="#333" strokeWidth={1.800} fill="none" /></svg>
        </div>
      </div>
      <div className="mt-[9px] ml-[174px] w-[74px] h-[21px] bg-[#e1e1e1] border border-[#adadad] flex items-center justify-center text-[11px] text-black shrink-0">OK</div>
    </div>
  );
}

export default function App() {
  return (
    <div className="relative w-[1366px] h-[728px] overflow-hidden flex flex-col bg-[#f0f0f0] font-['Liberation_Sans',sans-serif]">
      <div className="h-[23px] bg-[#c437b0] flex items-center shrink-0">
        <svg width={16} height={16} viewBox="0 0 16 16" className="ml-[3px]"><rect width={16} height={16} fill="#e6e6e6" stroke="#888" /><path d="M3 7l4 6l6 -11" stroke="#1d3a56" strokeWidth={2.500} fill="none" /></svg>
        <span className="ml-[4px] text-[12px] text-[#f7eaf5] whitespace-nowrap">1811110: Activtrades-Demo - Conto dimostrativo (demo) - [SILVER,Daily]</span>
        <div className="flex-1" />
        <div className="flex items-center w-[122px]">
          <svg width={46} height={12} viewBox="0 0 46 12"><path d="M1 6.500h10" stroke="#fff" /></svg>
          <svg width={46} height={12} viewBox="0 0 46 12"><path d="M1.500 3.500h7v8h-7zM3.500 3.500v-3h7v8h-2" stroke="#fff" fill="none" /></svg>
          <svg width={30} height={12} viewBox="0 0 30 12"><path d="M1 1l10 10M11 1l-10 10" stroke="#fff" fill="none" /></svg>
        </div>
      </div>
      <div className="h-[20px] bg-[#f5f5f5] flex items-center shrink-0 relative">
        <svg width={14} height={14} viewBox="0 0 14 14" className="ml-[5px]"><rect x={0.500} y={1.500} width={10} height={11} fill="#cfe0f5" stroke="#6f93c4" /><path d="M4 6h9v7h-9z" fill="#eef3fa" stroke="#6f93c4" /><path d="M6 11l2 -3l2 2l2 -2" stroke="#2a7fd0" fill="none" /></svg>
        <nav className="flex text-[12px] text-[#111] whitespace-nowrap">
          <span className="ml-[9px] w-[36px]">File</span>
          <span className="w-[68px]">Visualizza</span>
          <span className="w-[60px]">Inserisci</span>
          <span className="w-[52px]">Grafici</span>
          <span className="w-[70px]">Strumenti</span>
          <span className="w-[59px]">Finestra</span>
          <span>Aiuto</span>
        </nav>
        <div className="flex-1" />
        <div className="flex gap-[2px] mr-[2px]">
          <MdiBtn><div className="w-[5px] h-[2px] bg-[#555] mt-[6px]" /></MdiBtn>
          <MdiBtn><svg width={9} height={9} viewBox="0 0 9 9"><path d="M.5 3.500h5v5h-5zM2.500 3v-2.500h6v5h-2" stroke="#555" fill="none" /></svg></MdiBtn>
          <MdiBtn><svg width={8} height={8} viewBox="0 0 8 8"><path d="M1 1l6 6M7 1l-6 6" stroke="#555" strokeWidth={1.800} /></svg></MdiBtn>
        </div>
      </div>
      <Toolbar />
      <div className="h-[615px] bg-[#a6a6a6] flex flex-col gap-[1px] pt-[4px] shrink-0 border-t border-[#8a8a8a] -mt-[1px]">
        <Main />
        <Subs />
        <div className="flex pl-[4px] -mt-[1px]">
          {dates.map((d) => (
            <div key={d} className="w-[64px] shrink-0 text-[10px] tracking-[-0.3px] text-[#2f4f4f] whitespace-nowrap">
              <div className="h-[3px] ml-[1px] border-l border-[#2f4f4f]" />
              <div className="mt-[2px]">{d}</div>
            </div>
          ))}
        </div>
      </div>
      <div className="h-[20px] bg-[#f0f0f0] border-t border-black flex items-stretch shrink-0 text-[12px] text-[#555] relative">
        {tabs.map((t, i) => (
          <div key={t.t} className={`${t.w} shrink-0 flex items-center justify-center whitespace-nowrap`}>
            <span className="flex-1 text-center tracking-[-0.2px]">{t.t}</span>
            {i < tabs.length - 1 && <span className="w-[1px] h-[13px] bg-[#555]" />}
          </div>
        ))}
        <div className="w-[88px] bg-white border-x border-b border-black -mt-[1px] flex items-center justify-center text-[#111] tracking-[-0.2px]">SILVER,Daily</div>
        <div className="flex items-center pl-[10px] gap-[13px]">
          <svg width={6} height={8} viewBox="0 0 6 8"><path d="M5 0v8l-5 -4z" fill="#aaa" /></svg>
          <svg width={6} height={8} viewBox="0 0 6 8"><path d="M1 0v8l5 -4z" fill="#111" /></svg>
        </div>
      </div>
      <div className="flex-1 bg-[#f0f0f0] flex items-center text-[12px] text-[#111] relative border-t border-[#e4e4e4]">
        <span className="w-[673px] pl-[2px]">Per aiuto, premi F1</span>
        <span className="w-[116px] h-full border-l border-[#c8c8c8] pl-[5px] flex items-center">Default</span>
        <span className="w-[102px] h-full border-l border-[#c8c8c8]" />
        <span className="w-[70px] h-full border-l border-[#c8c8c8]" />
        <span className="w-[71px] h-full border-l border-[#c8c8c8]" />
        <span className="w-[68px] h-full border-l border-[#c8c8c8]" />
        <span className="w-[71px] h-full border-l border-[#c8c8c8]" />
        <span className="w-[65px] h-full border-l border-[#c8c8c8]" />
        <div className="flex-1 h-full border-l border-[#c8c8c8] flex items-center pl-[4px] gap-[3px]">
          <svg width={25} height={14} viewBox="0 0 25 14" shapeRendering="crispEdges">
            {Array.from({ length: 12 }, (_, i) => (
              <g key={i}>
                <rect x={i * 2} y={0} width={1} height={14} fill={i < 6 ? "#6f7f1a" : "#1d3a56"} />
                <rect x={i * 2} y={0} width={1} height={i < 6 ? 7 - i : Math.max(0, 12 - i)} fill={i < 6 ? "#8a9a20" : "#f0f0f0"} />
              </g>
            ))}
          </svg>
          <span>2451/5 kb</span>
        </div>
      </div>
      <Dialog />
    </div>
  );
}
